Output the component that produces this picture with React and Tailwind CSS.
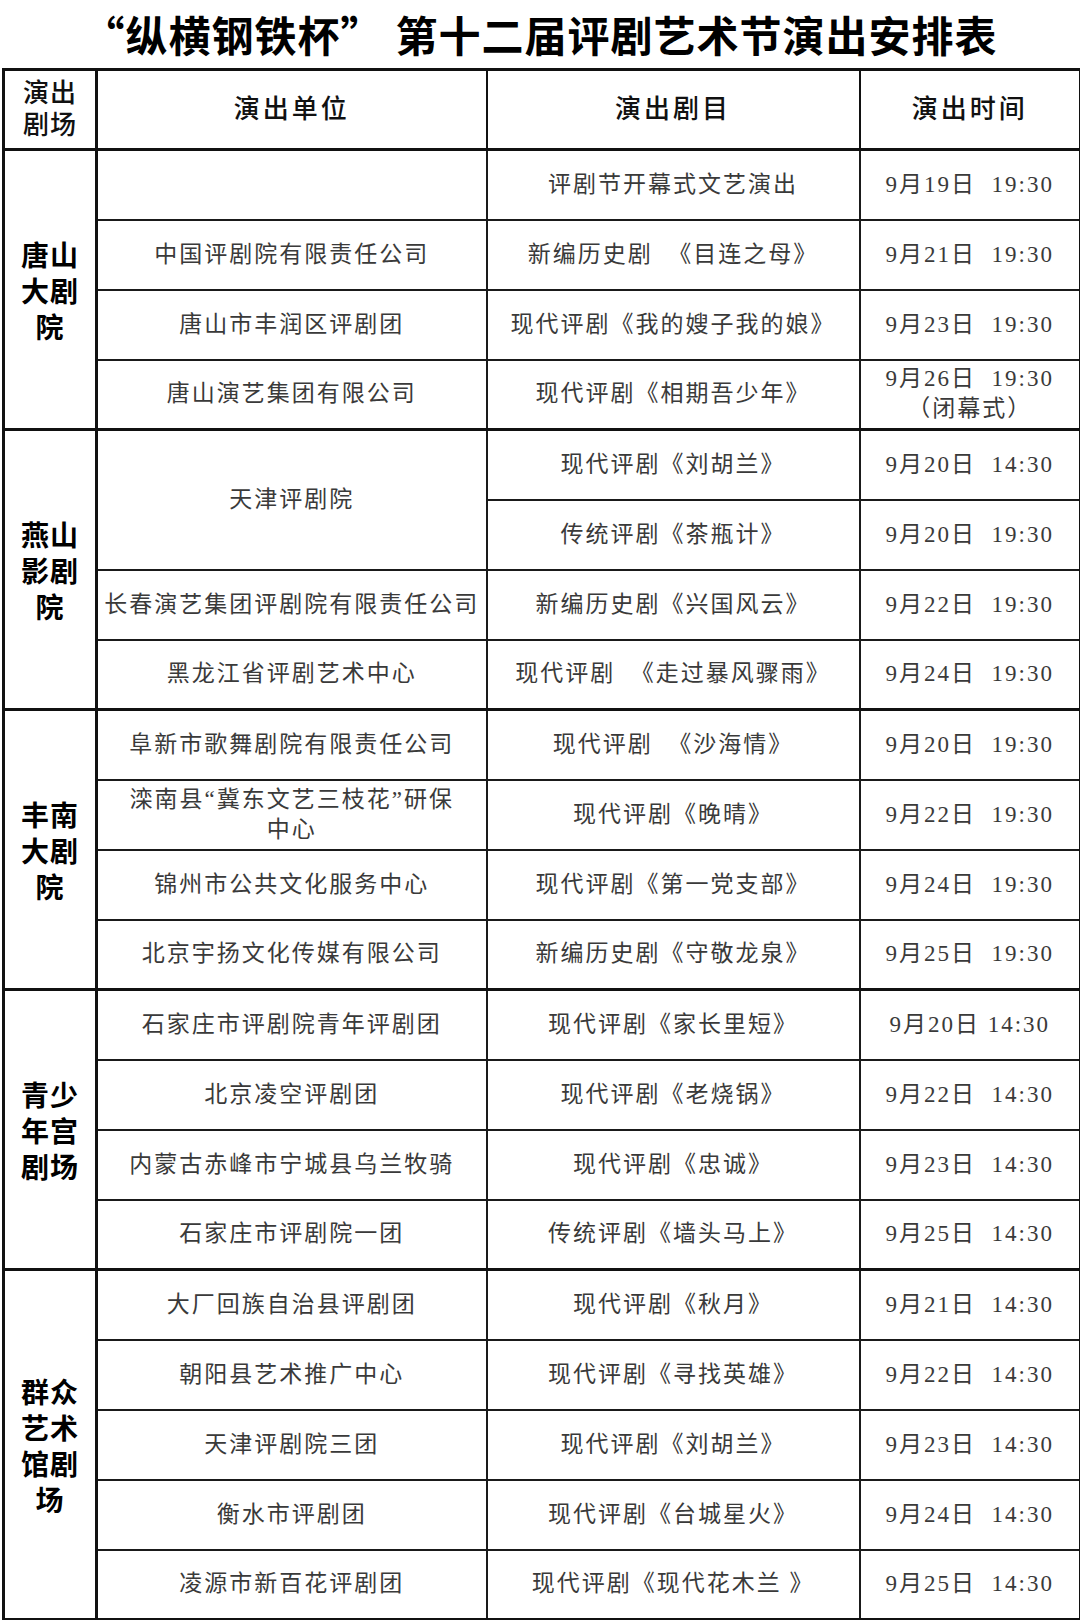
const groups = [
  {
    venue: ["唐山", "大剧", "院"],
    rows: [
      { org: "", play: "评剧节开幕式文艺演出", time: "9月19日  19:30" },
      { org: "中国评剧院有限责任公司", play: "新编历史剧  《目连之母》", time: "9月21日  19:30" },
      { org: "唐山市丰润区评剧团", play: "现代评剧《我的嫂子我的娘》", time: "9月23日  19:30" },
      { org: "唐山演艺集团有限公司", play: "现代评剧《相期吾少年》", time: "9月26日  19:30", note: "（闭幕式）" },
    ],
  },
  {
    venue: ["燕山", "影剧", "院"],
    rows: [
      { org: "天津评剧院", span: 2, play: "现代评剧《刘胡兰》", time: "9月20日  14:30" },
      { skip: true, play: "传统评剧《茶瓶计》", time: "9月20日  19:30" },
      { org: "长春演艺集团评剧院有限责任公司", tight: true, play: "新编历史剧《兴国风云》", time: "9月22日  19:30" },
      { org: "黑龙江省评剧艺术中心", play: "现代评剧  《走过暴风骤雨》", time: "9月24日  19:30" },
    ],
  },
  {
    venue: ["丰南", "大剧", "院"],
    rows: [
      { org: "阜新市歌舞剧院有限责任公司", play: "现代评剧  《沙海情》", time: "9月20日  19:30" },
      { org: "滦南县“冀东文艺三枝花”研保", org2: "中心", play: "现代评剧《晚晴》", time: "9月22日  19:30" },
      { org: "锦州市公共文化服务中心", play: "现代评剧《第一党支部》", time: "9月24日  19:30" },
      { org: "北京宇扬文化传媒有限公司", play: "新编历史剧《守敬龙泉》", time: "9月25日  19:30" },
    ],
  },
  {
    venue: ["青少", "年宫", "剧场"],
    rows: [
      { org: "石家庄市评剧院青年评剧团", play: "现代评剧《家长里短》", time: "9月20日 14:30" },
      { org: "北京凌空评剧团", play: "现代评剧《老烧锅》", time: "9月22日  14:30" },
      { org: "内蒙古赤峰市宁城县乌兰牧骑", play: "现代评剧《忠诚》", time: "9月23日  14:30" },
      { org: "石家庄市评剧院一团", play: "传统评剧《墙头马上》", time: "9月25日  14:30" },
    ],
  },
  {
    venue: ["群众", "艺术", "馆剧", "场"],
    rows: [
      { org: "大厂回族自治县评剧团", play: "现代评剧《秋月》", time: "9月21日  14:30" },
      { org: "朝阳县艺术推广中心", play: "现代评剧《寻找英雄》", time: "9月22日  14:30" },
      { org: "天津评剧院三团", play: "现代评剧《刘胡兰》", time: "9月23日  14:30" },
      { org: "衡水市评剧团", play: "现代评剧《台城星火》", time: "9月24日  14:30" },
      { org: "凌源市新百花评剧团", play: "现代评剧《现代花木兰 》", time: "9月25日  14:30" },
    ],
  },
];

const body = "border-2 border-[#1a1a1a] text-center align-middle text-[23px] text-[#3a3a3a] tracking-[2px] leading-[30px]";

function App() {
  return (
    <div className="w-[1080px] bg-white pb-[2px] font-['Liberation_Serif','Noto_Sans_CJK_SC',serif]">
      <h1 className="h-[68px] flex items-center justify-center text-[42px] font-bold text-black tracking-[1px] font-['Noto_Sans_CJK_SC',sans-serif] leading-none">
        <span>“纵横钢铁杯”</span>
        <span className="ml-[12px]">第十二届评剧艺术节演出安排表</span>
      </h1>
      <table className="ml-[2px] w-[1077px] table-fixed border-collapse border-[3px] border-[#111]">
        <colgroup>
          <col className="w-[93px]" />
          <col className="w-[390px]" />
          <col className="w-[373px]" />
          <col className="w-[221px]" />
        </colgroup>
        <thead>
          <tr className="h-[80px]">
            <th className="border-[3px] border-[#111] text-[26px] leading-[32px] font-medium text-[#111] tracking-[1px]">
              演出<br />剧场
            </th>
            <th className="border-2 border-[#111] text-[26px] font-medium text-[#111] tracking-[3px]">演出单位</th>
            <th className="border-2 border-[#111] text-[26px] font-medium text-[#111] tracking-[3px]">演出剧目</th>
            <th className="border-2 border-[#111] text-[26px] font-medium text-[#111] tracking-[3px]">演出时间</th>
          </tr>
        </thead>
        <tbody>
          {groups.map((g, gi) =>
            g.rows.map((r, ri) => (
              <tr key={gi + "-" + ri} className={ri === 0 ? "h-[70px] border-t-[3px] border-[#111]" : "h-[70px]"}>
                {ri === 0 && (
                  <td
                    rowSpan={g.rows.length}
                    className="border-[3px] border-[#111] text-center align-middle text-[28px] leading-[36px] font-bold text-black tracking-[1px] font-['Noto_Sans_CJK_SC',sans-serif]"
                  >
                    {g.venue.map((v, vi) => (
                      <div key={vi} className="h-[36px]">{v}</div>
                    ))}
                  </td>
                )}
                {!r.skip && (
                  <td rowSpan={r.span || 1} className={body + (r.tight ? " tracking-[0.5px]" : "")}>
                    {r.org}
                    {r.org2 && (
                      <>
                        <br />
                        {r.org2}
                      </>
                    )}
                  </td>
                )}
                <td className={body + " whitespace-pre"}>{r.play}</td>
                <td className={body + " whitespace-pre tracking-[1.5px]"}>
                  {r.time}
                  {r.note && (
                    <>
                      <br />
                      {r.note}
                    </>
                  )}
                </td>
              </tr>
            ))
          )}
        </tbody>
      </table>
    </div>
  );
}

export default App;
